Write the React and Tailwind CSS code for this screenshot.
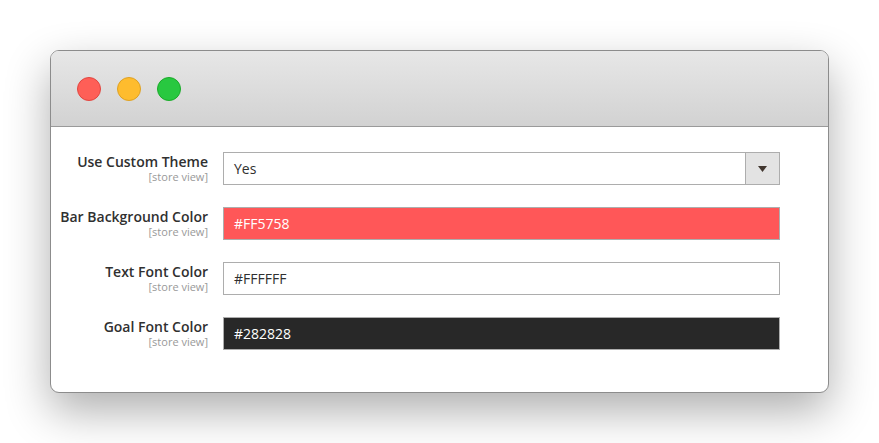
import React from 'react';

const ROWS = [
  { label: 'Use Custom Theme', type: 'select', value: 'Yes' },
  { label: 'Bar Background Color', type: 'color', value: '#FF5758', bg: 'bg-[#ff5758]', text: 'text-white' },
  { label: 'Text Font Color', type: 'color', value: '#FFFFFF', bg: 'bg-white', text: 'text-[#303030]' },
  { label: 'Goal Font Color', type: 'color', value: '#282828', bg: 'bg-[#282828]', text: 'text-white' },
];

export default function App() {
  return (
    <div className="min-h-screen bg-white px-[50px] pt-[50px] font-['Open_Sans',sans-serif]">
      <div className="w-[779px] rounded-[9px] border border-[#8c8c8c] bg-white overflow-hidden shadow-[0_18px_45px_rgba(0,0,0,0.32)]">
        {/* Title bar */}
        <div className="h-[76px] flex items-center gap-4 pl-[26px] border-b border-[#9a9a9a] bg-gradient-to-b from-[#e7e7e7] to-[#d2d2d2]">
          <span className="w-6 h-6 rounded-full bg-[#fe5f57] border border-[#e14640]" />
          <span className="w-6 h-6 rounded-full bg-[#febc2e] border border-[#dea123]" />
          <span className="w-6 h-6 rounded-full bg-[#28c840] border border-[#1aab29]" />
        </div>

        {/* Form */}
        <div className="pt-[25px] pb-[42px] flex flex-col gap-[22px]">
          {ROWS.map(r => (
            <div key={r.label} className="flex items-start">
              <div className="w-[157px] text-right pt-[1px] flex flex-col">
                <span className="text-[14px] leading-[17px] font-semibold text-[#303030]">{r.label}</span>
                <span className="text-[11px] leading-[13px] text-[#999999]">[store view]</span>
              </div>
              {r.type === 'select' ? (
                <div className="ml-[15px] w-[557px] h-[33px] flex border border-[#adadad] bg-white">
                  <span className="flex-1 pl-[10px] text-[14px] leading-[31px] text-[#303030]">{r.value}</span>
                  <span className="w-[34px] flex items-center justify-center bg-[#e3e3e3] border-l border-[#adadad]">
                    <svg width="9" height="6" viewBox="0 0 9 6"><path d="M0 0h9L4.5 6z" fill="#41362f" /></svg>
                  </span>
                </div>
              ) : (
                <div className={`ml-[15px] w-[557px] h-[33px] border border-[#adadad] pl-[10px] text-[14px] leading-[31px] ${r.bg} ${r.text}`}>
                  {r.value}
                </div>
              )}
            </div>
          ))}
        </div>
      </div>
    </div>
  );
}
